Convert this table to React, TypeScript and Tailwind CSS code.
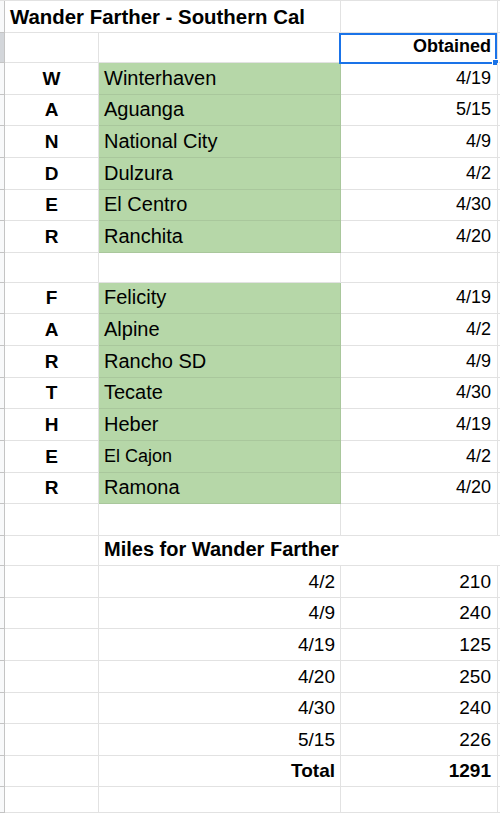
type Row = {
  h: string;
  a?: string;
  b?: string;
  c?: string;
  green?: boolean;
  boldB?: boolean;
  boldC?: boolean;
  rightB?: boolean;
  merge?: boolean;
  small?: boolean;
  selected?: boolean;
  title?: string;
};

const place = (a: string, b: string, c: string, small = false): Row => ({
  h: "h-[31.65px]",
  a,
  b,
  c,
  green: true,
  small,
});

const miles = (b: string, c: string): Row => ({ h: "h-[31.65px]", b, c, rightB: true });

const rows: Row[] = [
  { h: "h-[32px]", title: "Wander Farther - Southern Cal" },
  { h: "h-[30px]", c: "Obtained", boldC: true, selected: true },
  place("W", "Winterhaven", "4/19"),
  place("A", "Aguanga", "5/15"),
  place("N", "National City", "4/9"),
  place("D", "Dulzura", "4/2"),
  place("E", "El Centro", "4/30"),
  place("R", "Ranchita", "4/20"),
  { h: "h-[30px]" },
  place("F", "Felicity", "4/19"),
  place("A", "Alpine", "4/2"),
  place("R", "Rancho SD", "4/9"),
  place("T", "Tecate", "4/30"),
  place("H", "Heber", "4/19"),
  place("E", "El Cajon", "4/2", true),
  place("R", "Ramona", "4/20"),
  { h: "h-[31.65px]" },
  { h: "h-[30px]", b: "Miles for Wander Farther", boldB: true, merge: true },
  miles("4/2", "210"),
  miles("4/9", "240"),
  miles("4/19", "125"),
  miles("4/20", "250"),
  miles("4/30", "240"),
  miles("5/15", "226"),
  { h: "h-[31.65px]", b: "Total", c: "1291", rightB: true, boldB: true, boldC: true },
  { h: "h-[26px]" },
];

export default function App() {
  return (
    <div className="h-[813px] w-[500px] overflow-hidden border-t border-[#e2e2e2] bg-white text-black [font-family:'Liberation_Sans',Arial,sans-serif]">
      {rows.map((r, i) =>
        r.title ? (
          <div key={i} className={`flex ${r.h}`}>
            <div className="w-[5px] shrink-0 border-r border-b border-[#c4c4c4] bg-[#f8f9fa]" />
            <div className="flex w-[336px] shrink-0 items-end whitespace-nowrap border-r border-b border-[#e2e2e2] pb-[3px] pl-[5px] text-[20.4px] font-bold leading-[23px]">
              {r.title}
            </div>
            <div className="w-[157px] shrink-0 border-r border-b border-[#e2e2e2]" />
            <div className="flex-1 border-b border-[#e2e2e2]" />
          </div>
        ) : (
          <div key={i} className={`flex ${r.h}`}>
            <div
              className={`w-[5px] shrink-0 border-r border-b border-[#c4c4c4] ${
                r.selected ? "bg-[#d3d6da]" : "bg-[#f8f9fa]"
              }`}
            />
            <div className="flex w-[94px] shrink-0 items-end justify-center border-r border-b border-[#e2e2e2] pb-[4px] text-[19px] font-bold leading-[23px]">
              {r.a}
            </div>
            <div
              className={`flex w-[242px] shrink-0 items-end whitespace-nowrap border-b pb-[4px] leading-[23px] ${
                r.merge ? "border-[#e2e2e2]" : "border-r"
              } ${r.green ? "border-[#a9c79c] bg-[#b6d7a8]" : "border-[#e2e2e2]"} ${
                r.rightB ? "justify-end pr-[5px] text-[19px]" : r.small ? "pl-[5px] text-[18px]" : "pl-[5px] text-[20px]"
              } ${r.boldB ? "font-bold" : ""}`}
            >
              {r.b}
            </div>
            <div
              className={`relative flex w-[157px] shrink-0 items-end justify-end border-b border-[#e2e2e2] pb-[4px] pr-[6px] leading-[23px] ${
                r.merge ? "" : "border-r"
              } ${r.boldC ? "font-bold" : ""} ${r.selected || r.green ? "text-[18px]" : "text-[19px]"}`}
            >
              {r.c}
              {r.selected && (
                <div className="absolute left-[-2px] top-0 h-[31px] w-[158px] border-2 border-[#1a73e8]">
                  <div className="absolute bottom-[-4px] right-[-4px] h-[7px] w-[7px] border border-white bg-[#1a73e8]" />
                </div>
              )}
            </div>
            <div className="flex-1 border-b border-[#e2e2e2]" />
          </div>
        )
      )}
    </div>
  );
}
